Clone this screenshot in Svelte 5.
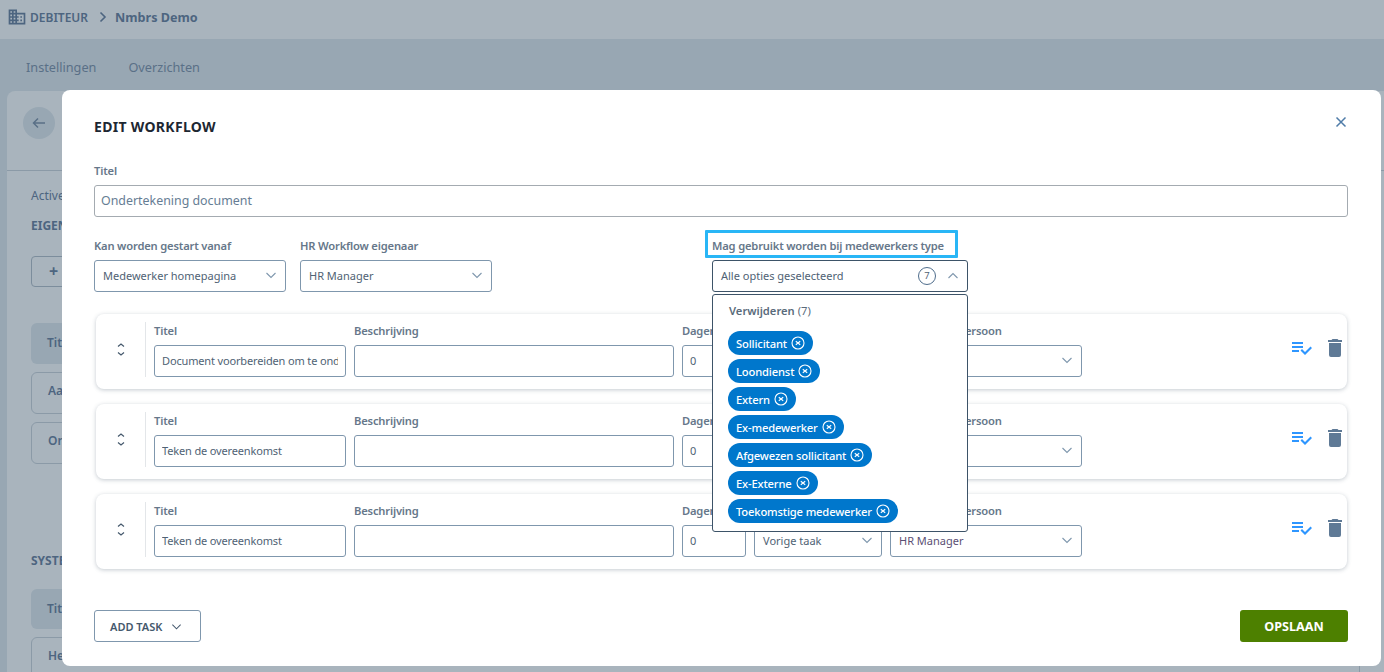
<script lang="ts">
  const types = [
    'Sollicitant',
    'Loondienst',
    'Extern',
    'Ex-medewerker',
    'Afgewezen sollicitant',
    'Ex-Externe',
    'Toekomstige medewerker'
  ];

  const tasks = [
    { title: 'Document voorbereiden om te ondertekenen', start: 'Vorige taak', owner: 'HR Manager' },
    { title: 'Teken de overeenkomst', start: 'Vorige taak', owner: 'HR Manager' },
    { title: 'Teken de overeenkomst', start: 'Vorige taak', owner: 'HR Manager' }
  ];
</script>

{#snippet chevron(cls = 'chevron')}
  <svg class={cls} viewBox="0 0 12 12" width="12" height="12" fill="none" stroke="currentColor" stroke-width="1.1">
    <path d="M1.5 4l4.5 4.5L10.5 4" />
  </svg>
{/snippet}

<div class="page">
  <header class="topbar">
    <svg class="domain" viewBox="0 0 24 24" width="20" height="20" fill="currentColor">
      <path d="M18,15H16V17H18M18,11H16V13H18M20,19H12V17H14V15H12V13H14V11H12V9H20M10,7H8V5H10M10,11H8V9H10M10,15H8V13H10M10,19H8V17H10M6,7H4V5H6M6,11H4V9H6M6,15H4V13H6M6,19H4V17H6M12,7V3H2V21H22V7H12Z" />
    </svg>
    <span class="crumb">DEBITEUR</span>
    <svg class="sep" viewBox="0 0 12 12" width="12" height="12" fill="none" stroke="currentColor" stroke-width="1.6">
      <path d="M3.5 1.5L8 6l-4.5 4.5" />
    </svg>
    <strong class="crumb-strong">Nmbrs Demo</strong>
  </header>

  <nav class="tabs">
    <span>Instellingen</span>
    <span>Overzichten</span>
  </nav>

  <main class="panel">
    <div class="panel-head">
      <div class="back">
        <svg viewBox="0 0 16 16" width="16" height="16" fill="none" stroke="currentColor" stroke-width="1.5">
          <path d="M14 8H2.5M7 3.5L2.5 8 7 12.5" />
        </svg>
      </div>
    </div>
    <div class="panel-body">
      <div class="muted">Active workflows</div>
      <h3>EIGEN WORKFLOWS</h3>
      <div class="add">+ Toevoegen</div>
      <div class="list-head">Titel</div>
      <div class="list-row">Aanvraag</div>
      <div class="list-row">Ondertekening</div>
      <h3 class="system">SYSTEEM WORKFLOWS</h3>
      <div class="list-head second">Titel</div>
      <div class="list-row">Herinnering</div>
    </div>
  </main>

  <div class="modal">
    <div class="modal-head">
      <h2>EDIT WORKFLOW</h2>
      <svg class="close" viewBox="0 0 12 12" width="12" height="12" fill="none" stroke="currentColor" stroke-width="1.5">
        <path d="M1.5 1.5l9 9M10.5 1.5l-9 9" />
      </svg>
    </div>

    <label class="label" for="wf-title">Titel</label>
    <input id="wf-title" class="title-input" value="Ondertekening document" />

    <div class="options">
      <div class="field small">
        <div class="label">Kan worden gestart vanaf</div>
        <div class="select">Medewerker homepagina {@render chevron()}</div>
      </div>
      <div class="field small">
        <div class="label">HR Workflow eigenaar</div>
        <div class="select">HR Manager {@render chevron()}</div>
      </div>
      <div class="field types">
        <div class="label highlighted">Mag gebruikt worden bij medewerkers type</div>
        <div class="select open">
          <span>Alle opties geselecteerd</span>
          <span class="count">7</span>
          <svg class="chevron" viewBox="0 0 12 12" width="12" height="12" fill="none" stroke="currentColor" stroke-width="1.1">
            <path d="M1.5 8L6 3.5 10.5 8" />
          </svg>
        </div>
        <div class="dropdown">
          <div class="drop-title">Verwijderen <span>(7)</span></div>
          {#each types as type}
            <div class="chip">
              {type}
              <svg viewBox="0 0 14 14" width="14" height="14" fill="none" stroke="currentColor" stroke-width="1.1">
                <circle cx="7" cy="7" r="6" />
                <path d="M4.8 5.2l4.4 3.6M9.2 5.2L4.8 8.8" />
              </svg>
            </div>
          {/each}
        </div>
      </div>
    </div>

    <div class="tasks">
      {#each tasks as task}
        <div class="task">
          <div class="handle">
            <svg viewBox="0 0 8 13" width="8" height="13" fill="none" stroke="currentColor" stroke-width="1.2">
              <path d="M1 3.5L4 1l3 2.5M1 9.5L4 12l3-2.5" />
            </svg>
          </div>
          <div class="cell w192">
            <div class="label">Titel</div>
            <input class="input" value={task.title} />
          </div>
          <div class="cell w320">
            <div class="label">Beschrijving</div>
            <input class="input" value="" />
          </div>
          <div class="cell w64">
            <div class="label">Dagen</div>
            <input class="input" value="0" />
          </div>
          <div class="cell w128">
            <div class="label">Start na</div>
            <div class="select">{task.start} {@render chevron()}</div>
          </div>
          <div class="cell w192">
            <div class="label">Toegewezen persoon</div>
            <div class="select owner">{task.owner} {@render chevron()}</div>
          </div>
          <div class="actions">
            <svg class="check" viewBox="0 0 24 24" width="24" height="24" fill="currentColor">
              <path d="M14,10H3V12H14V10M14,6H3V8H14V6M3,16H10V14H3V16M21.5,10.5L23,12L16,19L11.5,14.5L13,13L16,16L21.5,10.5Z" />
            </svg>
            <svg class="trash" viewBox="0 0 24 24" width="24" height="24" fill="currentColor">
              <path d="M19,4H15.5L14.5,3H9.5L8.5,4H5V6H19V4M6,19A2,2 0 0,0 8,21H16A2,2 0 0,0 18,19V7H6V19Z" />
            </svg>
          </div>
        </div>
      {/each}
    </div>

    <div class="footer">
      <button class="add-task">ADD TASK {@render chevron('chevron dark')}</button>
      <button class="save">OPSLAAN</button>
    </div>
  </div>
</div>

<style>
  :global(body) {
    margin: 0;
    background: #98a7b3;
    font-family: "Noto Sans", "Lato", sans-serif;
    font-size: 12px;
    color: #44586c;
  }

  .page {
    position: relative;
    height: 672px;
    overflow: hidden;
    display: flex;
    flex-direction: column;
  }

  .topbar {
    height: 39px;
    flex: none;
    box-sizing: border-box;
    padding: 0 0 5px 7px;
    background: #a9b4bd;
    display: flex;
    align-items: center;
    color: #4d6580;
  }

  .crumb {
    font-size: 12px;
    font-weight: 600;
    margin-left: 3px;
  }

  .sep {
    margin: 0 6px 0 9px;
  }

  .crumb-strong {
    font-size: 12.6px;
    font-weight: 700;
  }

  .tabs {
    height: 52px;
    flex: none;
    display: flex;
    gap: 32px;
    align-items: center;
    padding: 4px 0 0 26px;
    font-size: 12.7px;
    color: #5a7087;
    box-sizing: border-box;
  }

  .panel {
    flex: 1;
    margin-left: 7px;
    background: #a9b4bd;
    border-radius: 8px 0 0 0;
  }

  .panel-head {
    height: 80px;
    padding: 16px;
    box-sizing: border-box;
    border-bottom: 1px solid #8b9aa7;
  }

  .back {
    width: 32px;
    height: 32px;
    border-radius: 50%;
    background: #98a7b3;
    color: #5a7087;
    display: flex;
    align-items: center;
    justify-content: center;
  }

  .panel-body {
    padding: 17px 24px;
    color: #4d6580;
  }

  .muted {
    line-height: 16px;
  }

  h3 {
    font-size: 12px;
    line-height: 16px;
    margin: 14px 0 0;
  }

  .system {
    margin-top: 89px;
  }

  .add {
    margin-top: 22px;
    height: 31px;
    width: 120px;
    border: 1px solid #7c8d9c;
    border-radius: 4px;
    box-sizing: border-box;
    padding: 3px 17px;
    font-size: 16px;
    font-weight: 700;
    white-space: nowrap;
  }

  .list-head {
    margin-top: 36px;
    height: 41px;
    background: #98a7b3;
    border-radius: 6px;
    padding: 11px 16px;
    box-sizing: border-box;
    font-weight: 600;
  }

  .second {
    margin-top: 20px;
    height: 40px;
  }

  .list-row {
    margin-top: 8px;
    height: 42px;
    border: 1px solid #8b9aa7;
    border-radius: 6px;
    padding: 9px 16px;
    box-sizing: border-box;
    font-weight: 600;
  }

  .modal {
    position: absolute;
    left: 62px;
    top: 90px;
    width: 1319px;
    height: 576px;
    box-sizing: border-box;
    background: #fff;
    border-radius: 8px;
    padding: 28px 33px 24px 32px;
    display: flex;
    flex-direction: column;
  }

  .modal-head {
    display: flex;
    justify-content: space-between;
    height: 46px;
    flex: none;
  }

  h2 {
    margin: 0;
    font-size: 14px;
    line-height: 18px;
    font-weight: 700;
    letter-spacing: 0.3px;
    color: #1d2732;
  }

  .close {
    color: #4f7ca8;
    margin: -2px 1px 0 0;
  }

  .label {
    display: block;
    font-size: 11.2px;
    letter-spacing: -0.18px;
    line-height: 16px;
    font-weight: 600;
    color: #66778a;
    white-space: nowrap;
    margin-top: -1px;
    margin-bottom: 1px;
  }

  .title-input {
    margin-top: 5px;
    height: 32px;
    width: 100%;
    flex: none;
    box-sizing: border-box;
    border: 1px solid #a4abb1;
    border-radius: 3px;
    padding: 0 6px 1px;
    font: inherit;
    font-size: 12.4px;
    color: #667d94;
    outline: none;
  }

  .options {
    display: flex;
    margin-top: 19px;
    gap: 14px;
    flex: none;
  }

  .field {
    position: relative;
  }

  .small {
    width: 192px;
    padding-top: 2px;
  }

  .small .label {
    margin: 0 0 6px;
  }

  .types {
    width: 256px;
    margin-left: 206px;
    padding-top: 2px;
    z-index: 2;
  }

  .highlighted {
    box-sizing: border-box;
    width: 253px;
    border: 3px solid #29b6f6;
    border-radius: 1px;
    padding: 5px 4px 1px;
    margin: -8px 0 2px -7px;
  }

  .select {
    height: 32px;
    box-sizing: border-box;
    border: 1px solid #7f97ad;
    border-radius: 3px;
    padding: 0 8px 2px;
    display: flex;
    align-items: center;
    justify-content: space-between;
    font-size: 11px;
    color: #4f6274;
    background: #fff;
    white-space: nowrap;
  }

  .select.open {
    border-color: #3d5368;
    justify-content: flex-start;
    padding-bottom: 1px;
  }

  .count {
    margin-left: auto;
    width: 18px;
    height: 18px;
    box-sizing: border-box;
    border: 1px solid #4f6d8c;
    border-radius: 50%;
    font-size: 9.5px;
    line-height: 16px;
    text-align: center;
    margin-right: 11px;
  }

  .chevron {
    color: #7f97ad;
    flex: none;
  }

  .chevron.dark {
    color: #44586c;
    margin-left: 9px;
    width: 11px;
    height: 11px;
  }

  .owner {
    color: #5b4f74;
  }

  .dropdown {
    position: absolute;
    top: 58px;
    left: 0;
    width: 256px;
    height: 238px;
    box-sizing: border-box;
    background: #fff;
    border: 1px solid #3d5368;
    border-radius: 3px;
    padding: 8px 15px;
    display: flex;
    flex-direction: column;
    align-items: flex-start;
    gap: 4px;
  }

  .drop-title {
    font-size: 11.2px;
    font-weight: 600;
    color: #5a6b7b;
    line-height: 16px;
    margin: 0 0 8px 1px;
  }

  .drop-title span {
    font-weight: 400;
  }

  .chip {
    height: 24px;
    border-radius: 12px;
    background: #0077cc;
    color: #fff;
    font-size: 11.2px;
    letter-spacing: -0.15px;
    font-weight: 500;
    padding: 0 8px;
    display: flex;
    align-items: center;
    gap: 4px;
    white-space: nowrap;
  }

  .tasks {
    display: flex;
    flex-direction: column;
    gap: 15px;
    margin-top: 22px;
    padding: 0 1px 0 2px;
  }

  .task {
    height: 75px;
    box-sizing: border-box;
    border-radius: 8px;
    background: #fff;
    box-shadow: 0 1px 4px rgba(60, 80, 100, 0.3);
    padding: 8px 0 0 0;
    display: flex;
    gap: 8px;
  }

  .handle {
    width: 49px;
    height: 55px;
    border-right: 1px solid #e3e6e9;
    color: #44586c;
    display: flex;
    align-items: center;
    justify-content: center;
  }

  .cell .label {
    margin-bottom: 6px;
    margin-top: 1px;
  }

  .w192 {
    width: 192px;
  }

  .w320 {
    width: 320px;
  }

  .w64 {
    width: 64px;
  }

  .w128 {
    width: 128px;
  }

  .input {
    height: 32px;
    width: 100%;
    box-sizing: border-box;
    border: 1px solid #7f97ad;
    border-radius: 3px;
    padding: 0 7px 2px;
    font: inherit;
    font-size: 11px;
    letter-spacing: -0.15px;
    color: #4f6274;
    outline: none;
  }

  .actions {
    margin-left: auto;
    display: flex;
    gap: 10px;
    padding-top: 14px;
  }

  .check {
    color: #2e96ff;
  }

  .trash {
    color: #5f7a96;
  }

  .footer {
    margin-top: auto;
    display: flex;
    justify-content: space-between;
  }

  button {
    height: 32px;
    border-radius: 3px;
    font: inherit;
    font-size: 11px;
    font-weight: 600;
    box-sizing: border-box;
  }

  .add-task {
    width: 107px;
    background: #fff;
    border: 1px solid #7f97ad;
    color: #44586c;
    display: flex;
    align-items: center;
    padding: 0 0 0 15px;
  }

  .save {
    width: 108px;
    background: #4d8000;
    border: none;
    color: #fff;
    font-size: 12.6px;
    font-weight: 700;
  }
</style>
